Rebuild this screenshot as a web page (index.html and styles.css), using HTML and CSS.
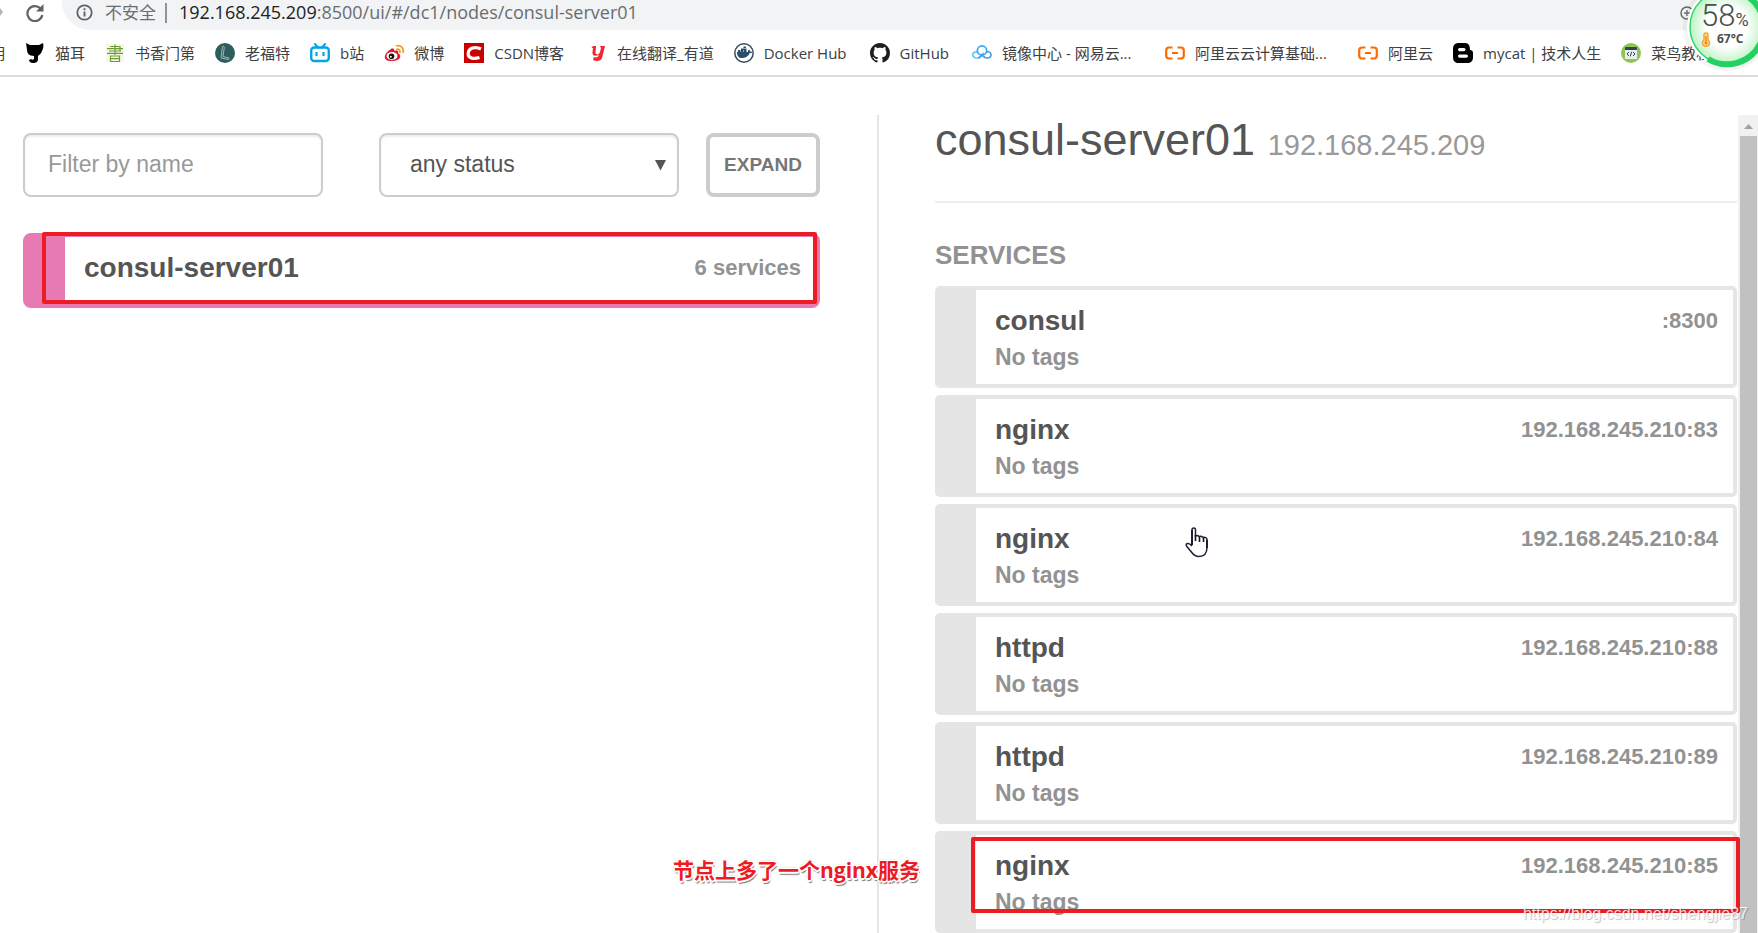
FILE: index.html
```html
<!DOCTYPE html>
<html lang="zh-CN">
<head>
<meta charset="utf-8">
<title>Consul</title>
<link rel="stylesheet" href="styles.css">
</head>
<body>
<header class="browser">
  <div class="toolbar">
    <svg class="forward" viewBox="0 0 5 20" width="5" height="20"><path d="M0 8l3 4-3 4z" fill="#b4b6b9"/></svg>
    <button class="reload" type="button" aria-label="Reload"><svg viewBox="0 0 18 18" width="18" height="18"><path d="M14.500 4.500A7.500 7.500 0 1 0 16.300 11" fill="none" stroke="#5f6368" stroke-width="2.200"/><path d="M17.500 0v7.500H10z" fill="#5f6368"/></svg></button>
    <div class="address">
      <svg viewBox="0 0 17 17" width="17" height="17"><circle cx="8.500" cy="8.500" r="7.200" fill="none" stroke="#5f6368" stroke-width="1.800"/><path d="M8.500 7.500v5M8.500 4.200v2" stroke="#5f6368" stroke-width="1.900"/></svg>
      <span class="insecure">不安全</span>
      <span class="url"><b>192.168.245.209</b>:8500/ui/#/dc1/nodes/consul-server01</span>
      <svg class="zoom-icon" viewBox="0 0 14 14" width="14" height="14"><path d="M7 4v6M4 7h6" stroke="#6a6d70" stroke-width="1.300"/><circle cx="7" cy="7" r="6" fill="none" stroke="#5f6368" stroke-width="1.400"/></svg>
    </div>
  </div>
  <nav class="bookmarks">
    <a class="cut" href="#">明</a>
    <a href="#"><svg viewBox="0 0 20 20"><path d="M1 0l4 2h9l4-2c1 3 0 6-1 8-1 3-3 4-4 5v3c0 3-2 4-5 4-2 0-4-1-4-3l2-1c1 1 2 1 3 0v-3C4 13 2 10 2 7z"/></svg>猫耳</a>
    <a href="#"><svg viewBox="0 0 20 20"><path d="M1 1h18v18H1z" fill="#f4f9e4"/><path d="M5 3.500h10V8H5M2 5.700h16M10 1.500V12M4 8h12M2 10.300h16M5.500 13h9v5.500h-9zM5.500 15.700h9" fill="none" stroke="#6c9b38" stroke-width="1.200"/></svg>书香门第</a>
    <a href="#"><svg viewBox="0 0 20 20"><circle cx="10" cy="10" r="10" fill="#2e5d5c"/><path d="M7.500 3.500c2-1 2 1 1.500 3l-1 7 6 1.500-.5 1.500-7.500-1.500z" fill="none" stroke="#a9c4bf" stroke-width=".9"/></svg>老福特</a>
    <a href="#"><svg viewBox="0 0 20 20"><path d="M5 1l3 3.500M15 1l-3 3.500" stroke="#00a7e5" stroke-width="2" stroke-linecap="round"/><rect x="1.200" y="4.500" width="17.600" height="13.500" rx="3" fill="none" stroke="#00a7e5" stroke-width="2.400"/><path d="M6.500 9v4M13.500 9v4" stroke="#00a7e5" stroke-width="2.200"/></svg>b站</a>
    <a href="#"><svg viewBox="0 0 20 20"><path d="M7 6c2-1 4 0 3 2 3-1 5 0 4 2 4 2 3 8-6 8-10 0-9-7-1-12z" fill="#e6162d"/><ellipse cx="8" cy="13" rx="5.500" ry="3.900" fill="#fff"/><circle cx="7.500" cy="13.200" r="2.800" fill="#111"/><circle cx="6.800" cy="13.700" r="1" fill="#fff"/><path d="M12 6.500c3-1 4.500 1 3.800 3.500M12 3c5-1.500 8 2 7 7" fill="none" stroke="#f39b1f" stroke-width="1.700"/></svg>微博</a>
    <a class="roomy" href="#"><svg viewBox="0 0 20 20"><path d="M0 0h20v20H0z" fill="#c80000"/><path d="M17 6C11 3 4.500 5 4.200 10.500 4 15 9 16.500 15.500 14.500" fill="none" stroke="#fff" stroke-width="3.200"/></svg>CSDN博客</a>
    <a href="#"><svg viewBox="0 0 20 20"><path d="M6 3h3l-.5 7c0 2 4 2 4.500-1l1-4-1-2h5l-3 12c-1 3-5 4-9 2l1-3c3 1 4 0 5-2-5 2-7 0-6.500-3L6 5H4.500z" fill="#ee2830"/></svg>在线翻译_有道</a>
    <a class="roomy" href="#"><svg viewBox="0 0 20 20"><circle cx="10" cy="10" r="9.200" fill="#fff" stroke="#394d5a" stroke-width="1.500"/><path d="M3 9h11c0-1 0-2 1-2.500.8.500 1 1 1 2 1-.3 2 0 2.300.4C17.500 10 17 10 15.800 10 14 14 11 15 7.500 15 5 15 3 13 3 9z" fill="#2a4d69"/><path d="M4 7h2.500v2H4zM7 7h2.500v2H7zM10 7h2.500v2H10zM7 5.500h5.500V7H7zM9.500 3.500H12V5H9.500z" fill="#2a4d69"/></svg>Docker Hub</a>
    <a class="roomy" href="#"><svg viewBox="0 0 16 16"><path fill="#1b1f23" d="M8 0C3.580 0 0 3.580 0 8c0 3.540 2.290 6.530 5.470 7.590.4.070.55-.17.55-.38 0-.19-.01-.82-.01-1.490-2.010.37-2.530-.49-2.690-.94-.09-.23-.48-.94-.82-1.130-.28-.15-.68-.52-.01-.53.630-.01 1.080.58 1.230.82.720 1.210 1.870.87 2.330.66.070-.52.280-.87.510-1.070-1.780-.2-3.640-.89-3.640-3.950 0-.87.310-1.590.82-2.150-.08-.2-.36-1.020.08-2.120 0 0 .67-.21 2.200.82.640-.18 1.320-.27 2-.27s1.360.09 2 .27c1.530-1.040 2.200-.82 2.200-.82.440 1.100.16 1.920.08 2.120.51.56.82 1.270.82 2.150 0 3.070-1.870 3.750-3.650 3.950.29.25.54.73.54 1.480 0 1.070-.01 1.930-.01 2.200 0 .21.150.46.550.38A8.010 8.010 0 0 0 16 8c0-4.420-3.580-8-8-8z"/></svg>GitHub</a>
    <a class="long" href="#"><svg viewBox="0 0 20 20"><g fill="none" stroke-width="1.700"><path d="M6 9c-7-1-7 6-1 6 4 0 4-4 7-5" stroke="#67c6f5"/><circle cx="10" cy="7.500" r="4.600" stroke="#35a7f0"/><path d="M14 8.500c7 0 6 6.500 1 6.500-3 0-4-2-5-3M6 15c3 0 3-3 5-4" stroke="#4a9dea"/></g></svg>镜像中心 - 网易云...</a>
    <a class="long" href="#"><svg viewBox="0 0 20 20"><path d="M7.500 4.500H4Q1.200 4.500 1.200 7.500v5q0 3 2.800 3h3.500M12.500 4.500H16q2.800 0 2.800 3v5q0 3-2.800 3h-3.500M7 10h6" fill="none" stroke="#ff6a00" stroke-width="2.200"/></svg>阿里云云计算基础...</a>
    <a href="#"><svg viewBox="0 0 20 20"><path d="M7.500 4.500H4Q1.200 4.500 1.200 7.500v5q0 3 2.800 3h3.500M12.500 4.500H16q2.800 0 2.800 3v5q0 3-2.800 3h-3.500M7 10h6" fill="none" stroke="#ff6a00" stroke-width="2.200"/></svg>阿里云</a>
    <a href="#"><svg viewBox="0 0 20 20"><path d="M6 0h6c4 0 5 3 5 7 2 0 3 1 3 3v4c0 4-2 6-6 6H6c-4 0-6-2-6-6V6c0-4 2-6 6-6z"/><rect x="5" y="5" width="7.500" height="3.200" rx="1.600" fill="#fff"/><rect x="5" y="11.500" width="10" height="3.200" rx="1.600" fill="#fff"/></svg>mycat | 技术人生</a>
    <a href="#"><svg viewBox="0 0 20 20"><circle cx="10" cy="10" r="10" fill="#8cc756"/><path d="M4 5h12v11H4z" fill="#e8eef0"/><path d="M4 4h12v3H4z" fill="#31465a"/><path d="M8 9l-2 2 2 2M12 9l2 2-2 2M10.700 8.800l-1.400 4.500" fill="none" stroke="#31465a"/></svg>菜鸟教程</a>
  </nav>
  <div class="monitor">
    <svg class="dial" viewBox="0 0 90 90" width="90" height="90">
      <defs><radialGradient id="glow"><stop offset=".55" stop-color="#fff"/><stop offset="1" stop-color="#bdf3c4"/></radialGradient></defs>
      <circle cx="45" cy="45" r="44" fill="#777" opacity=".08"/>
      <circle cx="45" cy="45" r="40" fill="#fff"/>
      <circle cx="45" cy="45" r="37" fill="url(#glow)" stroke="#2bd869" stroke-width="1.500"/>
      <path d="M26 77A37 37 0 1 0 59 11" fill="none" stroke="#22d160" stroke-width="6"/>
    </svg>
    <div class="usage">58<small>%</small></div>
    <div class="temp"><svg viewBox="0 0 10 15" width="10" height="15"><path d="M3 8V3a2 2 0 0 1 4 0v5a3.500 3.500 0 1 1-4 0z" fill="#ffe3ae" stroke="#f5a32a" stroke-width="1.500"/><path d="M5 4v7" stroke="#f08a1c" stroke-width="1.500"/><circle cx="5" cy="11" r="1.700" fill="#f08a1c"/></svg>67°C</div>
  </div>
</header>

<main class="app">
  <section class="nodes">
    <form class="filters">
      <div class="search"><input class="field" type="text" placeholder="Filter by name" aria-label="Filter by name"></div>
      <div class="status">
        <select class="field" aria-label="Status"><option>any status</option></select>
        <svg viewBox="0 0 12 12" width="12" height="12"><path d="M0 1h11L5.500 11.500z" fill="#555"/></svg>
      </div>
      <button class="expand" type="button">EXPAND</button>
    </form>
    <a class="node" href="#">
      <span class="name">consul-server01</span><span class="meta">6 services</span>
      <span class="mark mark-node"></span>
    </a>
    <p class="note">节点上多了一个nginx服务</p>
  </section>

  <section class="detail">
    <h1>consul-server01 <small>192.168.245.209</small></h1>
    <hr>
    <h2>SERVICES</h2>
    <div class="services">
      <a class="service" href="#"><span class="row"><span class="name">consul</span><span class="meta">:8300</span></span><span class="tags">No tags</span></a>
      <a class="service" href="#"><span class="row"><span class="name">nginx</span><span class="meta">192.168.245.210:83</span></span><span class="tags">No tags</span></a>
      <a class="service" href="#"><span class="row"><span class="name">nginx</span><span class="meta">192.168.245.210:84</span></span><span class="tags">No tags</span></a>
      <a class="service" href="#"><span class="row"><span class="name">httpd</span><span class="meta">192.168.245.210:88</span></span><span class="tags">No tags</span></a>
      <a class="service" href="#"><span class="row"><span class="name">httpd</span><span class="meta">192.168.245.210:89</span></span><span class="tags">No tags</span></a>
      <a class="service" href="#"><span class="row"><span class="name">nginx</span><span class="meta">192.168.245.210:85</span></span><span class="tags">No tags</span><span class="mark mark-service"></span></a>
    </div>
    <svg class="pointer" viewBox="0 0 24 31" width="24" height="31"><path d="M7 18V3q0-2 1.800-2T10.500 3v6q2-1 3.500.5 2.500-.5 4 .8 3.500-.3 4 2V20c0 6-3 9.500-8 9.500-4 0-6-2-8-5L1.500 19q-1-2 1-2.500T7 19" fill="#fff" stroke="#223" stroke-width="1.500"/><path d="M10.500 8v6M14.500 10v5M18.500 10.500V15M7 3v15M22 13v8" stroke="#112" stroke-width="1.600"/></svg>
  </section>

  <div class="scrollbar">
    <svg viewBox="0 0 20 21" width="20" height="21"><path d="M6 14l4.500-5 4.500 5z" fill="#a3a3a3"/></svg>
    <div class="thumb"></div>
  </div>
  <span class="watermark">https://blog.csdn.net/shengjie87</span>
</main>
</body>
</html>
```

FILE: styles.css
```css
* { box-sizing: border-box; }

body {
  margin: 0;
  height: 100vh;
  display: flex;
  flex-direction: column;
  overflow: hidden;
  background: #fff;
  color: #555;
  font-family: "Liberation Sans", Arial, sans-serif;
}

a { color: inherit; text-decoration: none; }

/* Browser chrome */
.browser {
  position: relative;
  border-bottom: 2px solid #dcdce1;
  font-family: "Open Sans", "Noto Sans CJK SC", sans-serif;
}

.toolbar { display: flex; height: 30px; }
.forward { margin-right: 21px; }
.reload {
  width: 18px;
  height: 26px;
  margin-right: 18px;
  padding: 4px 0;
  border: 0;
  background: none;
}
.reload svg { display: block; }

.address {
  flex: 1;
  display: flex;
  align-items: center;
  padding: 0 64px 5px 14px;
  border-radius: 0 0 0 28px;
  background: #f1f3f4;
  color: #6a6d70;
  font-size: 17px;
  line-height: 25px;
}
.insecure {
  margin: 0 12px 0 12px;
  padding-right: 9px;
  border-right: 2px solid #919396;
  line-height: 20px;
}
.url { font-size: 18px; }
.url b { color: #202124; font-weight: 400; }
.zoom-icon { margin-left: auto; }

.bookmarks {
  display: flex;
  align-items: center;
  gap: 20px;
  height: 45px;
  overflow: hidden;
  color: #3c4043;
  font-size: 15px;
  white-space: nowrap;
}
.bookmarks a {
  display: flex;
  flex: none;
  align-items: center;
  gap: 10px;
}
.bookmarks svg { width: 20px; height: 20px; }
.bookmarks .cut { width: 5px; justify-content: flex-end; overflow: hidden; }
.bookmarks .roomy { padding-right: 3px; }
.bookmarks .long { width: 173px; }

.monitor {
  position: absolute;
  top: -18px;
  right: -14px;
  width: 90px;
  height: 90px;
  color: #4a4f4b;
}
.dial { position: absolute; inset: 0; }
.usage {
  position: relative;
  padding: 19px 0 0 19px;
  font-family: Roboto, sans-serif;
  font-size: 31px;
  font-weight: 300;
  line-height: 30px;
}
.usage small { font-size: 18px; font-weight: 400; line-height: 1; }
.temp {
  position: relative;
  display: flex;
  align-items: center;
  gap: 6px;
  padding-left: 19px;
  font-size: 12px;
  font-weight: 700;
  line-height: 16px;
}

/* Consul UI */
.app {
  position: relative;
  flex: 1;
  display: flex;
  min-height: 0;
  padding-top: 38px;
}

.nodes {
  position: relative;
  width: 50%;
  padding: 18px 57px 0 23px;
  border-right: 2px solid #e5e5e5;
}

.filters { display: flex; margin-bottom: 36px; }
.field {
  display: block;
  width: 100%;
  height: 64px;
  padding: 0 23px 2px;
  border: 2px solid #ccc;
  border-radius: 8px;
  background: #fff;
  box-shadow: inset 0 2px 2px #eee;
  color: #555;
  font: 23px "Liberation Sans", Arial, sans-serif;
}
.field::placeholder { color: #999; }
.search { flex: 1; min-width: 0; }
.status { position: relative; flex: 1; min-width: 0; margin: 0 27px 0 56px; }
select.field { appearance: none; padding: 0 29px 2px; }
.status svg { position: absolute; right: 12px; top: 26px; }
.expand {
  width: 114px;
  height: 64px;
  padding: 0;
  border: 4px solid #ccc;
  border-radius: 8px;
  background: #fff;
  color: #777;
  font: bold 19px "Liberation Sans", Arial, sans-serif;
}

.node {
  position: relative;
  display: flex;
  justify-content: space-between;
  align-items: center;
  padding: 14px 15px 19px 19px;
  border: 4px solid #e77ab2;
  border-left-width: 42px;
  border-radius: 8px;
}

.name { color: #555; font-size: 28px; font-weight: 700; line-height: 34px; }
.meta { color: #929292; font-size: 22px; font-weight: 700; line-height: 34px; }
.tags { color: #929292; font-size: 23px; font-weight: 700; line-height: 38px; }

.detail {
  position: relative;
  flex: 1;
  min-width: 0;
  padding: 0 1px 0 56px;
}
h1 { margin: 0; font-size: 45px; font-weight: 400; line-height: 50px; }
h1 small { color: #999; font-size: 29px; }
hr { margin: 31px 0 0; border: 0; border-top: 2px solid #eee; }
h2 {
  margin: 37px 0 16px;
  color: #929292;
  font-size: 26px;
  line-height: 30px;
}
.services { display: flex; flex-direction: column; gap: 7px; }
.service {
  position: relative;
  display: block;
  padding: 14px 15px 8px 19px;
  border: 4px solid #e5e5e5;
  border-left-width: 41px;
  border-radius: 5px;
}
.row { display: flex; justify-content: space-between; }
.service .tags { display: block; }

.scrollbar {
  display: flex;
  flex-direction: column;
  width: 20px;
  background: #f1f1f1;
}
.thumb { flex: 1; margin: 0 1px 0 2px; background: #c1c1c1; }

/* Annotations over the page */
.mark {
  position: absolute;
  z-index: 1;
  border: 4px solid #ed1c24;
  border-radius: 2px;
}
.mark-node { inset: -5px -1px 0 -23px; }
.mark-service { inset: 2px -7px 16px -5px; }

.note {
  position: absolute;
  right: -43px;
  bottom: 48px;
  z-index: 1;
  margin: 0;
  color: #ed1c24;
  font-family: "Open Sans", "Noto Sans CJK SC", sans-serif;
  font-size: 21px;
  font-weight: 700;
  line-height: 30px;
  white-space: nowrap;
  text-shadow: 1px 1px 0 #fff, -1px -1px 0 #fff, 1px -1px 0 #fff, -1px 1px 0 #fff,
    2px 0 0 #fff, -2px 0 0 #fff, 0 2px 0 #fff, 1px 3px 1px #777, 0 0 3px #999;
}

.pointer { position: absolute; left: 306px; top: 412px; }

.watermark {
  position: absolute;
  right: 10px;
  bottom: 9px;
  z-index: 2;
  color: rgba(255, 255, 255, .85);
  font-size: 16px;
  line-height: 20px;
  text-shadow: 1px 1px 1px rgba(0, 0, 0, .25);
}
```
